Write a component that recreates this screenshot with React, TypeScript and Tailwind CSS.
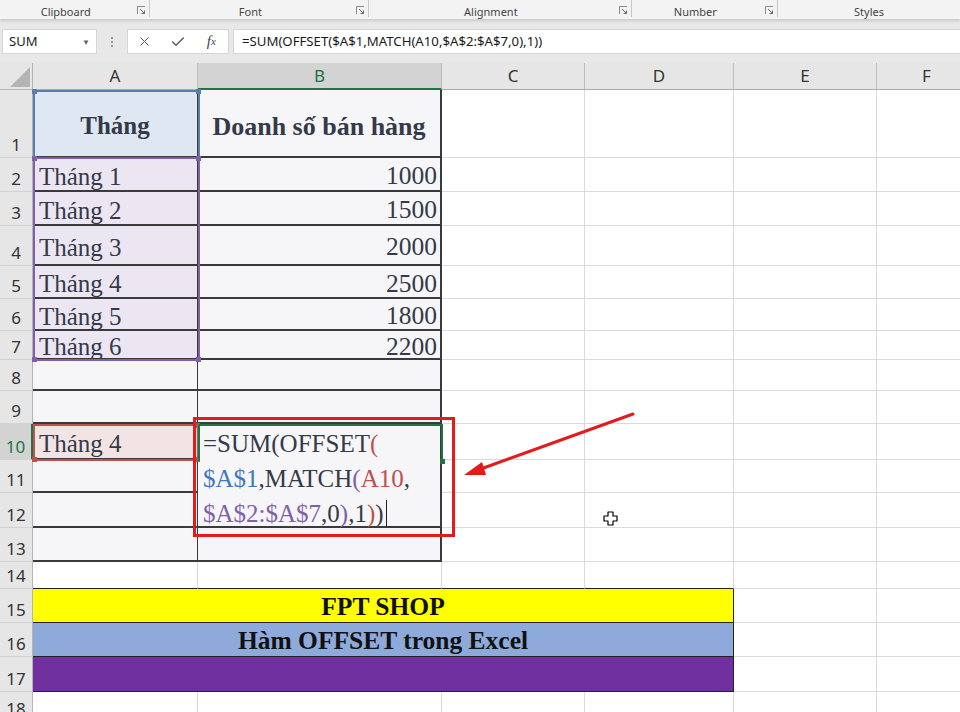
import React from 'react';
import clsx from 'clsx';
import { X, Check } from 'lucide-react';

const serif = "font-['Liberation_Serif','Times_New_Roman',serif]";

const months = [
    { a: 'Tháng 1', b: '1000' },
    { a: 'Tháng 2', b: '1500' },
    { a: 'Tháng 3', b: '2000' },
    { a: 'Tháng 4', b: '2500' },
    { a: 'Tháng 5', b: '1800' },
    { a: 'Tháng 6', b: '2200' },
];

const Launcher: React.FC = () => (
    <svg width="9" height="9" viewBox="0 0 9 9" className="shrink-0 mt-[6px]">
        <path d="M0.5 8V0.5H8" fill="none" stroke="#8a8a8a" strokeWidth="1" />
        <path d="M3 3L7.5 7.5M7.5 4.5V7.5H4.5" fill="none" stroke="#6a6a6a" strokeWidth="1" />
    </svg>
);

const Group: React.FC<{ label: string; w: string; launcher?: boolean }> = ({ label, w, launcher = true }) => (
    <div className={clsx('flex items-start h-[17px] border-r border-[#c8c8c8] pr-[3px]', w)}>
        <div className="flex-1 text-center text-[11px] text-[#444] leading-none pt-[6px] pr-[6px]">{label}</div>
        {launcher && <Launcher />}
    </div>
);

const RowHead: React.FC<{ n: number; active?: boolean }> = ({ n, active }) => (
    <div
        className={clsx(
            'flex items-end justify-center pb-[2px] text-[17px] leading-[20px] border-b border-[#d2d2d2]',
            active
                ? 'bg-[#d3d3d3] text-[#217346] border-r-2 border-r-[#217346]'
                : 'bg-[#e6e6e6] text-[#333] border-r border-r-[#b5b5b5]'
        )}
    >
        {n}
    </div>
);

const Light: React.FC<{ dark?: boolean }> = ({ dark }) => (
    <div className={clsx('bg-white border-r border-b border-[#dadada]', dark && 'border-b-[#222]')} />
);

const ColHead: React.FC<{ label: string; active?: boolean }> = ({ label, active }) => (
    <div
        className={clsx(
            'flex items-center justify-center text-[17px] border-r border-[#bdbdbd]',
            active
                ? 'bg-[#d3d3d3] text-[#217346] border-b-2 border-b-[#217346]'
                : 'bg-[#e6e6e6] text-[#333] border-b border-b-[#ababab]'
        )}
    >
        {label}
    </div>
);

const Handle: React.FC<{ cls: string }> = ({ cls }) => <div className={clsx('absolute w-[5px] h-[5px]', cls)} />;

export default function App() {
    return (
        <div className="relative w-[960px] h-[712px] overflow-hidden bg-white font-['Noto_Sans',sans-serif]">
            {/* Ribbon group labels */}
            <div className="relative z-10 h-[19px] bg-[#f3f3f3] flex items-start shadow-[0_2px_3px_rgba(0,0,0,0.13)]">
                <Group label="Clipboard" w="w-[152px]" />
                <Group label="Font" w="w-[221px]" />
                <Group label="Alignment" w="w-[265px]" />
                <Group label="Number" w="w-[148px]" />
                <div className="w-[182px] shrink-0 text-center text-[11px] text-[#444] leading-none pt-[6px]">Styles</div>
            </div>

            {/* Formula bar */}
            <div className="h-[44px] bg-[#e8e8e8] flex items-start pt-[10px] pl-[2px]">
                <div className="w-[95px] h-[25px] bg-white border border-[#d6d6d6] flex items-center justify-between pl-[6px] pr-[6px] text-[13px] text-[#222]">
                    <span>SUM</span>
                    <span className="text-[8px] text-[#666]">▼</span>
                </div>
                <div className="w-[30px] h-[25px] flex flex-col items-center justify-center gap-[2px]">
                    <div className="w-[2px] h-[2px] bg-[#9a9a9a]" />
                    <div className="w-[2px] h-[2px] bg-[#9a9a9a]" />
                    <div className="w-[2px] h-[2px] bg-[#9a9a9a]" />
                </div>
                <div className="w-[102px] h-[25px] bg-white border border-[#d6d6d6] flex items-center text-[#555]">
                    <div className="w-[34px] flex justify-center"><X className="w-[15px] h-[15px]" strokeWidth={1.6} /></div>
                    <div className="w-[34px] flex justify-center"><Check className="w-[16px] h-[16px]" strokeWidth={2} /></div>
                    <div className={clsx('w-[34px] flex justify-center italic text-[15px] text-[#444]', serif)}>
                        f<span className="text-[11px] mt-[3px]">x</span>
                    </div>
                </div>
                <div className="ml-[4px] flex-1 h-[25px] bg-white border-y border-l border-[#d6d6d6] flex items-center pl-[8px] text-[13.2px] text-[#1a1a1a]">
                    =SUM(OFFSET($A$1,MATCH(A10,$A$2:$A$7,0),1))
                </div>
            </div>

            {/* Sheet */}
            <div className="relative">
                <div className="grid grid-cols-[33px_165px_244px_143px_149px_143px_100px] grid-rows-[27px_68px_34px_34px_40px_33px_32px_29px_31px_33px_36px_33px_35px_34px_27px_34px_34px_35px_30px]">
                    {/* column headers */}
                    <div className="bg-[#e6e6e6] border-r border-b border-[#b5b5b5] flex items-end justify-end pr-[2px] pb-[2px]">
                        <svg width="20" height="20" viewBox="0 0 20 20">
                            <polygon points="0,20 20,20 20,0" fill="#b4b4b4" />
                        </svg>
                    </div>
                    <ColHead label="A" />
                    <ColHead label="B" active />
                    <ColHead label="C" />
                    <ColHead label="D" />
                    <ColHead label="E" />
                    <ColHead label="F" />

                    {/* row 1 */}
                    <RowHead n={1} />
                    <div className={clsx('bg-[#dfe7f2] border-r border-b-2 border-[#3a3a3a] flex items-center justify-center pt-[6px] font-bold text-[25px] text-[#343a48]', serif)}>
                        Tháng
                    </div>
                    <div className={clsx('bg-[#f6f6f8] border-r-2 border-b-2 border-[#3a3a3a] flex items-center justify-center pt-[6px] font-bold text-[26px] text-[#343a48]', serif)}>
                        Doanh số bán hàng
                    </div>
                    <Light />
                    <Light />
                    <Light />
                    <Light />

                    {/* rows 2-7 */}
                    {months.map((m, i) => (
                        <React.Fragment key={m.a}>
                            <RowHead n={i + 2} />
                            <div className={clsx('bg-[#ebe6f2] border-r border-b-2 border-[#3a3a3a] flex items-center pl-[6px] pt-[5px] text-[25px] text-[#343a48]', serif)}>
                                {m.a}
                            </div>
                            <div className={clsx('bg-[#f6f6f8] border-r-2 border-b-2 border-[#3a3a3a] flex items-center justify-end pr-[3px] pt-[5px] text-[25.5px] text-[#343a48]', serif)}>
                                {m.b}
                            </div>
                            <Light />
                            <Light />
                            <Light />
                            <Light />
                        </React.Fragment>
                    ))}

                    {/* rows 8-9 */}
                    {[8, 9].map((n) => (
                        <React.Fragment key={n}>
                            <RowHead n={n} />
                            <div className="bg-[#f6f6f8] border-r border-b-2 border-[#3a3a3a]" />
                            <div className="bg-[#f6f6f8] border-r-2 border-b-2 border-[#3a3a3a]" />
                            <Light />
                            <Light />
                            <Light />
                            <Light />
                        </React.Fragment>
                    ))}

                    {/* row 10 with the cell being edited */}
                    <RowHead n={10} active />
                    <div className={clsx('bg-[#f2e4e4] border-r border-b-2 border-[#3a3a3a] flex items-center pl-[6px] pt-[5px] text-[25px] text-[#343a48]', serif)}>
                        Tháng 4
                    </div>
                    <div className={clsx('row-span-3 bg-[#f6f6f8] border-r-2 border-b-2 border-[#3a3a3a] pl-[5px] pt-[2px] text-[25px] leading-[35px] text-[#343a48]', serif)}>
                        <div>
                            =SUM(OFFSET<span className="text-[#c0504d]">(</span>
                        </div>
                        <div>
                            <span className="text-[#3f77c3]">$A$1</span>,MATCH<span className="text-[#7f60a9]">(</span>
                            <span className="text-[#c0504d]">A10</span>,
                        </div>
                        <div className="flex items-center">
                            <span className="text-[#7f60a9]">$A$2:$A$7</span>,0<span className="text-[#7f60a9]">)</span>,1
                            <span className="text-[#c0504d]">)</span>)
                            <span className="inline-block w-px h-[27px] bg-[#222] ml-[2px]" />
                        </div>
                    </div>
                    <Light />
                    <Light />
                    <Light />
                    <Light />

                    {/* rows 11-12 (B is covered by the edited cell) */}
                    {[11, 12].map((n) => (
                        <React.Fragment key={n}>
                            <RowHead n={n} />
                            <div className="bg-[#f6f6f8] border-r border-b-2 border-[#3a3a3a]" />
                            <Light />
                            <Light />
                            <Light />
                            <Light />
                        </React.Fragment>
                    ))}

                    {/* row 13 */}
                    <RowHead n={13} />
                    <div className="bg-[#f6f6f8] border-r border-b-2 border-[#3a3a3a]" />
                    <div className="bg-[#f6f6f8] border-r-2 border-b-2 border-[#3a3a3a]" />
                    <Light />
                    <Light />
                    <Light />
                    <Light />

                    {/* row 14 */}
                    <RowHead n={14} />
                    <Light dark />
                    <Light dark />
                    <Light dark />
                    <Light dark />
                    <Light />
                    <Light />

                    {/* rows 15-17 merged A:D */}
                    <RowHead n={15} />
                    <div className={clsx('col-span-4 bg-[#ffff00] border-r border-b border-[#222] flex items-center justify-center pt-[3px] font-bold text-[25.5px] text-[#111]', serif)}>
                        FPT SHOP
                    </div>
                    <Light />
                    <Light />

                    <RowHead n={16} />
                    <div className={clsx('col-span-4 bg-[#8eaadb] border-r border-b border-[#222] flex items-center justify-center pt-[3px] font-bold text-[25.5px] text-[#111]', serif)}>
                        Hàm OFFSET trong Excel
                    </div>
                    <Light />
                    <Light />

                    <RowHead n={17} />
                    <div className="col-span-4 bg-[#7030a0] border-r border-b border-[#222]" />
                    <Light />
                    <Light />

                    {/* row 18 */}
                    <RowHead n={18} />
                    <Light />
                    <Light />
                    <Light />
                    <Light />
                    <Light />
                    <Light />
                </div>

                {/* formula reference highlights */}
                <div className="absolute left-[33px] top-[27px] w-[167px] h-[69px] border-2 border-[#5a7db0]">
                    <Handle cls="bg-[#5a7db0] -left-[3px] -top-[3px]" />
                    <Handle cls="bg-[#5a7db0] -right-[3px] -top-[3px]" />
                </div>
                <div className="absolute left-[33px] top-[94px] w-[167px] h-[204px] border-2 border-[#7f60a9]">
                    <Handle cls="bg-[#7f60a9] -left-[3px] -top-[3px]" />
                    <Handle cls="bg-[#7f60a9] -right-[3px] -top-[3px]" />
                    <Handle cls="bg-[#7f60a9] -left-[3px] -bottom-[3px]" />
                    <Handle cls="bg-[#7f60a9] -right-[3px] -bottom-[3px]" />
                </div>
                <div className="absolute left-[33px] top-[361px] w-[166px] h-[37px] border-2 border-[#c0504d]">
                    <Handle cls="bg-[#c0504d] -right-[3px] -top-[3px]" />
                    <Handle cls="bg-[#c0504d] -right-[3px] -bottom-[3px]" />
                    <Handle cls="bg-[#c0504d] -left-[3px] -bottom-[3px]" />
                </div>
                <div className="absolute left-[198px] top-[361px] w-[245px] h-[37px] border-2 border-b-0 border-[#217346]">
                    <Handle cls="bg-[#217346] -right-[4px] -bottom-[3px]" />
                </div>
            </div>

            {/* red annotation box and arrow */}
            <div className="absolute left-[193px] top-[417px] w-[262px] h-[120px] border-[3px] border-[#e31b1b]" />
            <svg className="absolute left-0 top-0" width="960" height="712" viewBox="0 0 960 712">
                <line x1="633" y1="414" x2="478" y2="470" stroke="#e31b1b" strokeWidth="3" strokeLinecap="round" />
                <polygon points="464,475 482,462 486,475" fill="#e31b1b" />
                <path
                    d="M608 512h5v4h4v5h-4v4h-5v-4h-4v-5h4z"
                    fill="#fff"
                    stroke="#000"
                    strokeWidth="1.2"
                    strokeLinejoin="round"
                />
            </svg>
        </div>
    );
}
